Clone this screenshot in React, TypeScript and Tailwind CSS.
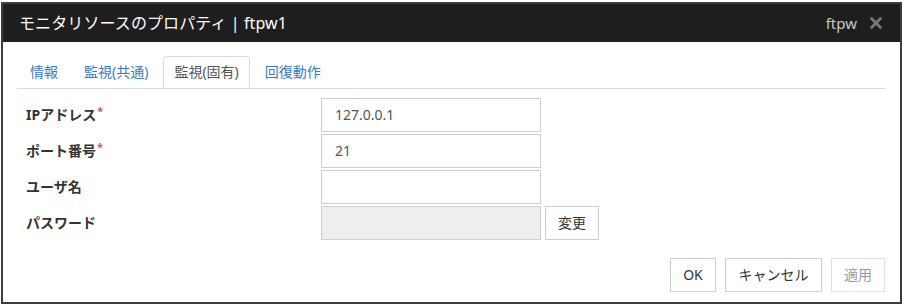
import { X } from "lucide-react";

const tabs = [
  { name: "情報", active: false },
  { name: "監視(共通)", active: false },
  { name: "監視(固有)", active: true },
  { name: "回復動作", active: false },
];

const fields = [
  { label: "IPアドレス", required: true, value: "127.0.0.1" },
  { label: "ポート番号", required: true, value: "21" },
  { label: "ユーザ名", required: false, value: "" },
];

export default function App() {
  return (
    <div className="w-[904px] h-[306px] bg-white font-['Noto_Sans','Noto_Sans_CJK_JP',sans-serif]">
      <div className="ml-[1px] mt-[2px] w-[901px] h-[302px] border-2 border-[#3d3d3d] flex flex-col">
        {/* Title bar */}
        <div className="h-[38px] bg-[#1e1e1e] flex items-center pl-[16px] pr-[15px] shrink-0">
          <h1 className="text-[16px] leading-none text-white tracking-[0.1px]">
            モニタリソースのプロパティ | ftpw1
          </h1>
          <span className="ml-auto text-[15px] leading-none text-[#c8c8c8]">ftpw</span>
          <X className="w-[18px] h-[18px] ml-[10px] text-[#7a7a7a]" strokeWidth={3.5} />
        </div>

        {/* Body */}
        <div className="flex-1 bg-white px-[14px] pt-[14px]">
          <div className="flex border-b border-[#dddddd] pl-[2px] gap-[4px]">
            {tabs.map((t) => (
              <div
                key={t.name}
                className={
                  t.active
                    ? "h-[32px] -mb-px px-[10px] flex items-center text-[14px] leading-none text-[#555555] bg-white border border-[#dddddd] border-b-white rounded-t-[4px]"
                    : "h-[32px] px-[10px] flex items-center text-[14px] leading-none text-[#3b7bbf] border border-transparent"
                }
              >
                {t.name}
              </div>
            ))}
          </div>

          <div className="mt-[9px] flex flex-col gap-[2px]">
            {fields.map((f) => (
              <div key={f.label} className="flex items-center h-[34px]">
                <div className="w-[304px] pl-[9px] text-[14px] font-bold text-[#333333] leading-none">
                  {f.label}
                  {f.required && (
                    <span className="text-[#d9534f] text-[11px] align-top relative -top-[3px] ml-[1px]">*</span>
                  )}
                </div>
                <div className="w-[220px] h-[34px] border border-[#cfcfcf] bg-white flex items-center px-[13px] text-[14px] text-[#555555] leading-none">
                  {f.value}
                </div>
              </div>
            ))}
            <div className="flex items-center h-[34px]">
              <div className="w-[304px] pl-[9px] text-[14px] font-bold text-[#333333] leading-none">
                パスワード
              </div>
              <div className="w-[220px] h-[34px] border border-[#cfcfcf] bg-[#eeeeee]" />
              <button className="ml-[4px] w-[54px] h-[34px] border border-[#cfcfcf] bg-white text-[14px] text-[#333333] leading-none">
                変更
              </button>
            </div>
          </div>

          <div className="mt-[18px] flex justify-end pr-[1px] gap-[9px]">
            <button className="w-[46px] h-[34px] border border-[#cfcfcf] bg-white text-[14px] text-[#333333] leading-none">
              OK
            </button>
            <button className="w-[97px] h-[34px] border border-[#cfcfcf] bg-white text-[14px] text-[#333333] leading-none">
              キャンセル
            </button>
            <button className="w-[54px] h-[34px] border border-[#e0e0e0] bg-white text-[14px] text-[#999999] leading-none">
              適用
            </button>
          </div>
        </div>
      </div>
    </div>
  );
}
